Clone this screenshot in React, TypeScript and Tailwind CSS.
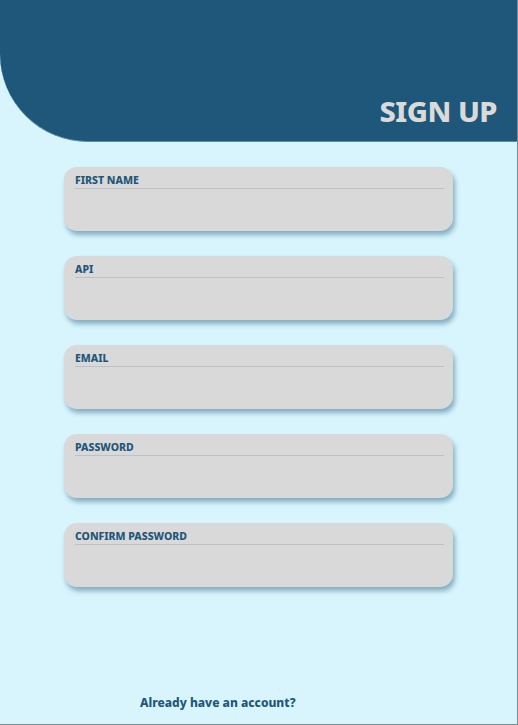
const fields = ["FIRST NAME", "API", "EMAIL", "PASSWORD", "CONFIRM PASSWORD"];

function Field({ label }: { label: string }) {
  return (
    <div className="h-[64px] w-[389px] rounded-[13px] bg-[#d9d9d9] pt-[7px] pr-[9px] pl-[11px] shadow-[2px_4px_5px_0px_rgba(30,87,121,0.45)]">
      <div className="border-b border-[#b9c3c7] pb-[1px] text-[10.5px] font-extrabold leading-[13px] text-[#1e5779]">
        {label}
      </div>
    </div>
  );
}

export default function App() {
  return (
    <div className="flex h-[725px] w-[518px] flex-col border-r border-b border-[#7c8c91] bg-[#d8f5fd] font-['Noto_Sans',sans-serif]">
      <header className="flex h-[142px] shrink-0 items-end justify-end rounded-bl-[88px] border-b border-[#5f8aa3] bg-[#1e5779] pr-[20px] pb-[16px]">
        <h1 className="text-[29px] font-extrabold leading-none tracking-[-0.5px] text-[#dadada]">SIGN UP</h1>
      </header>

      <main className="flex flex-col gap-[25px] pt-[25px] pl-[64px]">
        {fields.map((f) => (
          <Field key={f} label={f} />
        ))}
      </main>

      <footer className="mt-auto pb-[11px] pl-[140px]">
        <span className="text-[12px] font-extrabold text-[#1e5779]">Already have an account?</span>
      </footer>
    </div>
  );
}
